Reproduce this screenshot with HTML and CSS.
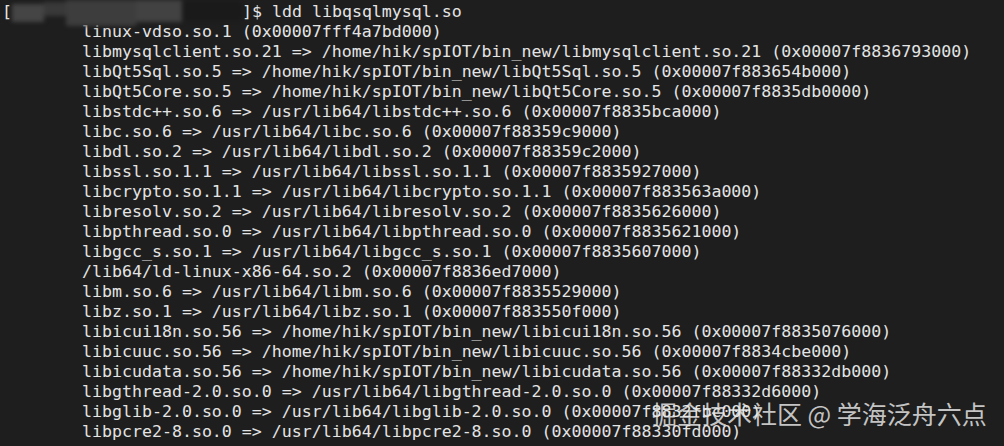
FILE: index.html
```html
<!DOCTYPE html>
<html lang="en">
<head>
<meta charset="utf-8">
<title>ldd libqsqlmysql.so</title>
<link rel="stylesheet" href="styles.css">
</head>
<body>
<div class="term">
<div class="line prompt"><span class="bracket">[</span><span class="redact"><span class="r1"></span><span class="r2"></span><span class="r3"></span><span class="r4"></span><span class="r5"></span></span><span>]$ ldd libqsqlmysql.so</span></div>
<div class="line ind">linux-vdso.so.1 (0x00007fff4a7bd000)</div>
<div class="line ind">libmysqlclient.so.21 =&gt; /home/hik/spIOT/bin_new/libmysqlclient.so.21 (0x00007f8836793000)</div>
<div class="line ind">libQt5Sql.so.5 =&gt; /home/hik/spIOT/bin_new/libQt5Sql.so.5 (0x00007f883654b000)</div>
<div class="line ind">libQt5Core.so.5 =&gt; /home/hik/spIOT/bin_new/libQt5Core.so.5 (0x00007f8835db0000)</div>
<div class="line ind">libstdc++.so.6 =&gt; /usr/lib64/libstdc++.so.6 (0x00007f8835bca000)</div>
<div class="line ind">libc.so.6 =&gt; /usr/lib64/libc.so.6 (0x00007f88359c9000)</div>
<div class="line ind">libdl.so.2 =&gt; /usr/lib64/libdl.so.2 (0x00007f88359c2000)</div>
<div class="line ind">libssl.so.1.1 =&gt; /usr/lib64/libssl.so.1.1 (0x00007f8835927000)</div>
<div class="line ind">libcrypto.so.1.1 =&gt; /usr/lib64/libcrypto.so.1.1 (0x00007f883563a000)</div>
<div class="line ind">libresolv.so.2 =&gt; /usr/lib64/libresolv.so.2 (0x00007f8835626000)</div>
<div class="line ind">libpthread.so.0 =&gt; /usr/lib64/libpthread.so.0 (0x00007f8835621000)</div>
<div class="line ind">libgcc_s.so.1 =&gt; /usr/lib64/libgcc_s.so.1 (0x00007f8835607000)</div>
<div class="line ind">/lib64/ld-linux-x86-64.so.2 (0x00007f8836ed7000)</div>
<div class="line ind">libm.so.6 =&gt; /usr/lib64/libm.so.6 (0x00007f8835529000)</div>
<div class="line ind">libz.so.1 =&gt; /usr/lib64/libz.so.1 (0x00007f883550f000)</div>
<div class="line ind">libicui18n.so.56 =&gt; /home/hik/spIOT/bin_new/libicui18n.so.56 (0x00007f8835076000)</div>
<div class="line ind">libicuuc.so.56 =&gt; /home/hik/spIOT/bin_new/libicuuc.so.56 (0x00007f8834cbe000)</div>
<div class="line ind">libicudata.so.56 =&gt; /home/hik/spIOT/bin_new/libicudata.so.56 (0x00007f88332db000)</div>
<div class="line ind">libgthread-2.0.so.0 =&gt; /usr/lib64/libgthread-2.0.so.0 (0x00007f88332d6000)</div>
<div class="line ind">libglib-2.0.so.0 =&gt; /usr/lib64/libglib-2.0.so.0 (0x00007f8832fbc000)</div>
<div class="line ind">libpcre2-8.so.0 =&gt; /usr/lib64/libpcre2-8.so.0 (0x00007f88330fd000)</div>
</div>
<div class="watermark">掘金技术社区 @ 学海泛舟六点</div>
</body>
</html>
```

FILE: styles.css
```css
html, body {
  margin: 0;
  padding: 0;
  background: #1e1e1e;
  overflow: hidden;
  width: 1004px;
  height: 446px;
}

.term {
  padding: 2px 0 0 2px;
  font-family: "DejaVu Sans Mono", "Liberation Mono", monospace;
  font-size: 16.6px;
  line-height: 20px;
  color: #e4e4e4;
}

.line {
  height: 20px;
  white-space: pre;
}

.ind {
  padding-left: 80px;
}

.prompt {
  display: flex;
  align-items: flex-start;
}

.bracket {
  width: 10px;
}

.redact {
  display: flex;
  width: 230px;
  height: 26px;
  margin-top: -2px;
  filter: blur(2px);
}

.redact span {
  display: block;
  height: 100%;
}

.r1 { width: 32px; background: #454545; height: 18px !important; margin-top: 4px; }
.r2 { width: 22px; background: #393939; height: 14px !important; margin-top: 2px; }
.r3 { width: 70px; background: #3d3d3d; }
.r4 { width: 46px; background: #424242; height: 22px !important; }
.r5 { width: 60px; background: #1a1a1a; height: 18px !important; margin-top: 2px; }

.watermark {
  position: absolute;
  left: 652px;
  top: 401px;
  font-family: "Noto Sans CJK SC", "Noto Sans", sans-serif;
  font-size: 25px;
  line-height: 25px;
  color: rgba(235, 235, 235, 0.82);
  white-space: nowrap;
}
```
